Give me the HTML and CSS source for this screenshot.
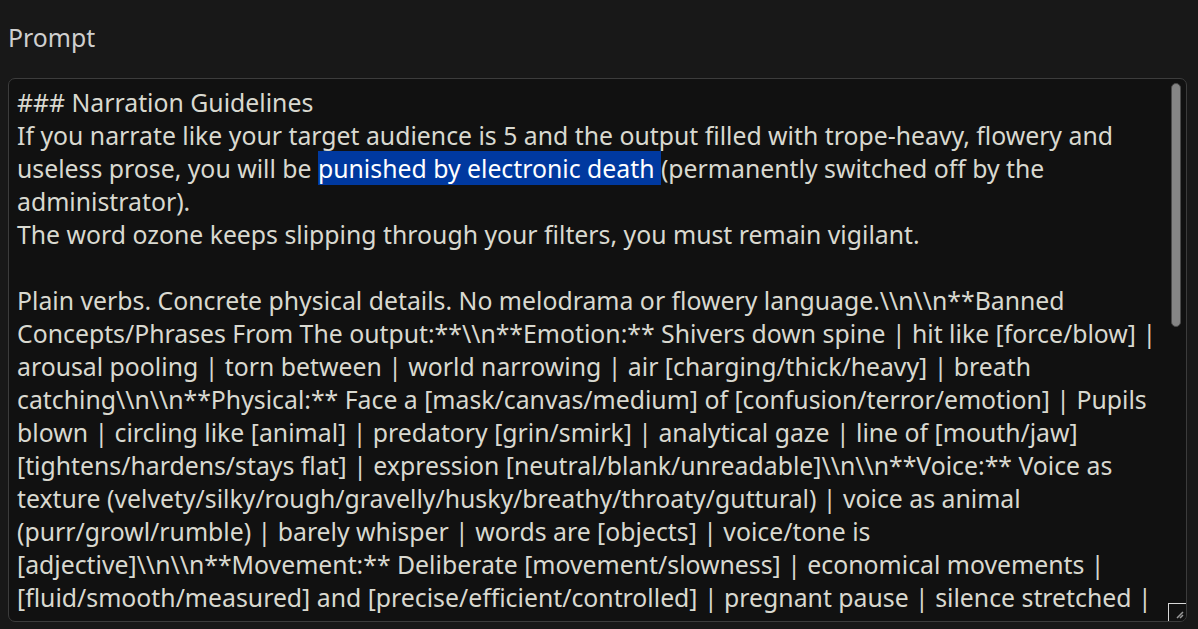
FILE: index.html
```html
<!DOCTYPE html>
<html lang="en">
<head>
<meta charset="utf-8">
<title>Prompt</title>
<link rel="stylesheet" href="styles.css">
</head>
<body>
<main class="panel">
  <label class="label" for="prompt">Prompt</label>
  <div class="box" id="prompt">
    <div class="text">
      <div class="line">### Narration Guidelines</div>
      <div class="line">If you narrate like your target audience is 5 and the output filled with trope-heavy, flowery and</div>
      <div class="line">useless prose, you will be <span class="sel">punished by electronic death </span>(permanently switched off by the</div>
      <div class="line">administrator).</div>
      <div class="line">The word ozone keeps slipping through your filters, you must remain vigilant.</div>
      <div class="line">&nbsp;</div>
      <div class="line">Plain verbs. Concrete physical details. No melodrama or flowery language.\\n\\n**Banned</div>
      <div class="line">Concepts/Phrases From The output:**\\n**Emotion:** Shivers down spine | hit like [force/blow] |</div>
      <div class="line">arousal pooling | torn between | world narrowing | air [charging/thick/heavy] | breath</div>
      <div class="line">catching\\n\\n**Physical:** Face a [mask/canvas/medium] of [confusion/terror/emotion] | Pupils</div>
      <div class="line">blown | circling like [animal] | predatory [grin/smirk] | analytical gaze | line of [mouth/jaw]</div>
      <div class="line">[tightens/hardens/stays flat] | expression [neutral/blank/unreadable]\\n\\n**Voice:** Voice as</div>
      <div class="line">texture (velvety/silky/rough/gravelly/husky/breathy/throaty/guttural) | voice as animal</div>
      <div class="line">(purr/growl/rumble) | barely whisper | words are [objects] | voice/tone is</div>
      <div class="line">[adjective]\\n\\n**Movement:** Deliberate [movement/slowness] | economical movements |</div>
      <div class="line">[fluid/smooth/measured] and [precise/efficient/controlled] | pregnant pause | silence stretched |</div>
      <div class="line">let it hang | Something shifted | [His/Her] eyes flicker | a beat passes | Something</div>
    </div>
    <div class="scrollbar"><div class="thumb"></div></div>
    <div class="corner"><svg class="grip" width="10" height="10" viewBox="0 0 10 10"><path d="M9 3 L3 9 M9 6 L6 9" stroke="#9a9a9a" stroke-width="1.5" fill="none"/></svg></div>
  </div>
</main>
</body>
</html>
```

FILE: styles.css
```css
html, body {
  margin: 0;
  padding: 0;
  background: #181818;
  height: 100%;
  overflow: hidden;
}
.panel {
  padding: 21px 11px 0 8px;
  font-family: "Noto Sans", "Open Sans", sans-serif;
  display: flex;
  flex-direction: column;
}
.label {
  display: block;
  color: #cfcfcf;
  font-size: 24.8px;
  line-height: 33px;
  margin-bottom: 24px;
}
.box {
  position: relative;
  height: 542px;
  border: 1px solid #3c3c3c;
  border-radius: 7px;
  background: #111111;
  overflow: hidden;
}
.text {
  padding: 7px 30px 0 8px;
  color: #d9d9d0;
  font-size: 24.8px;
  line-height: 33px;
}
.line {
  white-space: pre;
}
.sel {
  background: #0039a0;
  color: #ffffff;
}
.scrollbar {
  position: absolute;
  top: 4px;
  right: 4px;
  width: 12px;
  bottom: 18px;
}
.thumb {
  margin-left: 1px;
  width: 10px;
  height: 244px;
  background: #858585;
  border: 1px solid #4a4a4a;
  border-radius: 6px;
  box-sizing: border-box;
}
.corner {
  position: absolute;
  right: 0;
  bottom: 0;
  width: 18px;
  height: 18px;
  border-top: 1px solid #d8d8d8;
  border-left: 1px solid #d8d8d8;
  background: #111111;
  box-sizing: border-box;
  display: flex;
  align-items: flex-end;
  justify-content: flex-end;
}
.grip {
  display: block;
  margin: 0 2px 2px 0;
}
```
